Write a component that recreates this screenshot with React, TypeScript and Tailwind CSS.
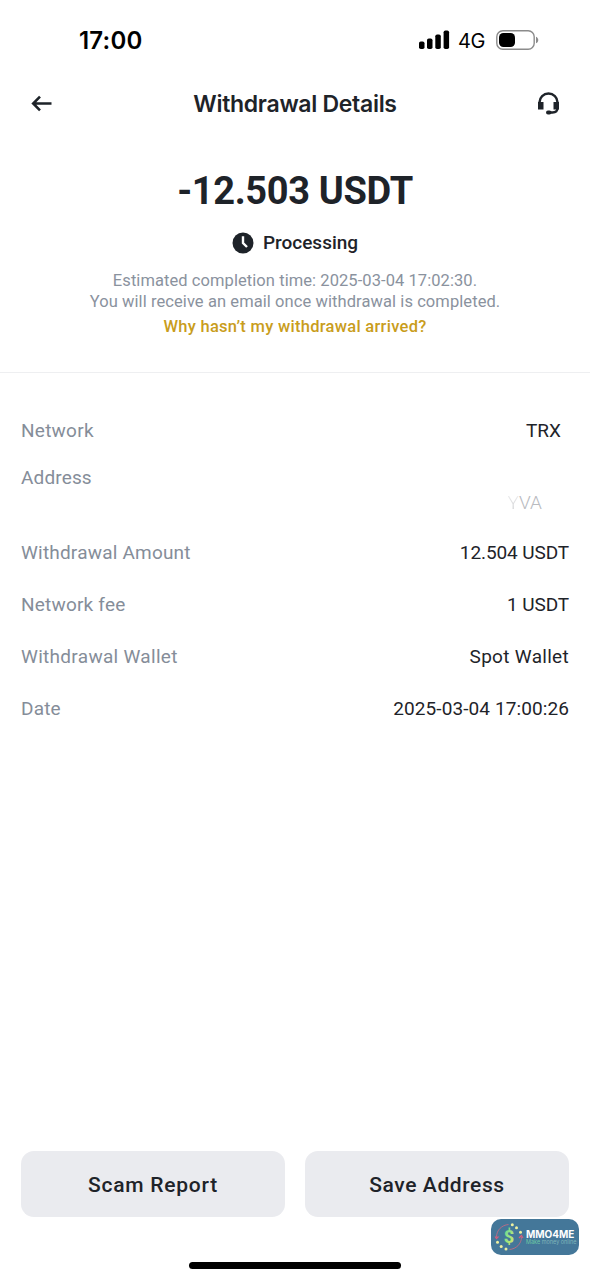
type Detail = { label: string; value: string; row: string; labelTracking: string; valueStyle: string };

const details: Detail[] = [
  { label: "Network", value: "TRX", row: "h-[47px]", labelTracking: "tracking-[0.25px]", valueStyle: "mr-2 tracking-[0px]" },
  { label: "Address", value: "", row: "h-[47px]", labelTracking: "tracking-[0.15px]", valueStyle: "" },
  { label: "Withdrawal Amount", value: "12.504 USDT", row: "h-[52px]", labelTracking: "tracking-[0.2px]", valueStyle: "tracking-[-0.1px]" },
  { label: "Network fee", value: "1 USDT", row: "h-[52px]", labelTracking: "tracking-[0.2px]", valueStyle: "tracking-[-0.1px]" },
  { label: "Withdrawal Wallet", value: "Spot Wallet", row: "h-[52px]", labelTracking: "tracking-[0.3px]", valueStyle: "tracking-[0.3px]" },
  { label: "Date", value: "2025-03-04 17:00:26", row: "h-[52px]", labelTracking: "tracking-[0.2px]", valueStyle: "tracking-[0.1px]" },
];

function StatusBar() {
  return (
    <div className="flex h-20 items-center justify-between pl-[79px] pr-[51px] font-['Inter',sans-serif] text-black">
      <span className="mt-[2px] text-[24px] font-semibold leading-6 tracking-[0.2px]">17:00</span>
      <div className="flex items-center">
        <svg className="mr-[8px]" width="31" height="20" viewBox="0 0 31 20">
          <rect x="0" y="11.5" width="5.5" height="7.5" rx="1.8" />
          <rect x="8" y="8.5" width="5.5" height="10.5" rx="1.8" />
          <rect x="16.3" y="4.5" width="5.5" height="14.5" rx="1.8" />
          <rect x="24.6" y="0.5" width="5.5" height="18.5" rx="1.8" />
        </svg>
        <span className="mr-[11px] mt-[2px] w-[27px] text-[20px] leading-6 tracking-[-0.4px]">4G</span>
        <svg width="43" height="20" viewBox="0 0 43 20">
          <rect x="0.8" y="0.8" width="37.4" height="18.4" rx="6" fill="none" stroke="#8b8b8b" strokeWidth="1.4" />
          <rect x="3" y="3" width="16" height="14" rx="4.4" />
          <path d="M40 6.7C43 8 43 12 40 13.3Z" fill="#8b8b8b" />
        </svg>
      </div>
    </div>
  );
}

function Header() {
  return (
    <header className="flex h-12 items-center justify-between pl-[30px] pr-[30px]">
      <svg width="23" height="18" viewBox="0 0 23 18" fill="none" stroke="#1e2329" strokeWidth="2.6">
        <path d="M21.5 8.5H3M10 1.7L3.2 8.5l6.8 6.8" />
      </svg>
      <h1 className="font-['Inter',sans-serif] text-[23px] font-semibold tracking-[-0.3px]">Withdrawal Details</h1>
      <svg width="23" height="24" viewBox="0 0 23 24">
        <path d="M2.5 11.5V10.3a9 8.8 0 0 1 18 0V16q0 4.5-5 4.5H12" fill="none" stroke="#1e2329" strokeWidth="2.4" />
        <path d="M1 10h5.5v7.5H1zM16.5 10H22v7.5h-5.5z" fill="#1e2329" />
        <rect x="9" y="18.6" width="5.5" height="4" rx="2" fill="#1e2329" />
      </svg>
    </header>
  );
}

function Summary() {
  return (
    <section className="flex h-[245px] flex-col items-center border-b border-[#eeeff1] pt-[39px] text-center">
      <p className="text-[38px] font-bold leading-[48px] tracking-[-0.35px]">-12.503 USDT</p>
      <div className="mt-[16px] flex h-6 items-center gap-[9px]">
        <svg width="22" height="22" viewBox="0 0 22 22">
          <circle cx="11" cy="11" r="10.5" fill="#1e2329" />
          <path d="M11 4.2V11l4 4" fill="none" stroke="#fff" strokeWidth="2.4" />
        </svg>
        <span className="mt-px text-[19px] font-medium tracking-[0px]">Processing</span>
      </div>
      <p className="mt-[15px] whitespace-nowrap text-[16.5px] leading-[21px] text-[#8a929e]">
        <span className="tracking-[0.07px]">Estimated completion time: 2025-03-04 17:02:30.</span>
        <br />
        <span className="tracking-[0.08px]">You will receive an email once withdrawal is completed.</span>
      </p>
      <a className="mt-1 text-[16.5px] font-medium leading-[22px] tracking-[0.28px] text-[#c99d1c]">Why hasn’t my withdrawal arrived?</a>
    </section>
  );
}

function MaskedAddress() {
  return (
    <span className="mr-[27px] mt-[51px] text-[19px] font-light text-[#b9bbbf]">
      <span className="bg-linear-to-b from-[#f6f6f7] to-[#c4c5c8] bg-clip-text text-transparent">Y</span>VA
    </span>
  );
}

function Details() {
  return (
    <dl className="flex-1 px-[21px] pt-[34px]">
      {details.map((d) => (
        <div key={d.label} className={`flex items-center justify-between text-[19px] leading-6 ${d.row} ${d.label === "Address" ? "mb-[26px]" : ""}`}>
          <dt className={`text-[#858d99] ${d.labelTracking}`}>{d.label}</dt>
          <dd className={`flex ${d.valueStyle}`}>{d.value || <MaskedAddress />}</dd>
        </div>
      ))}
    </dl>
  );
}

function Brand() {
  return (
    <div className="absolute left-[491px] top-[1219px] flex h-9 w-22 items-center rounded-[10px] bg-[#447799]">
      <svg className="ml-[3px] shrink-0" width="31" height="32" viewBox="0 0 31 32">
        <defs>
          <linearGradient id="coin" x1="0" y1="0" x2="1" y2="1">
            <stop stopColor="#55d6a0" />
            <stop offset="1" stopColor="#e3ee62" />
          </linearGradient>
        </defs>
        <path d="M2.5 16C2.5 9 8 4 14.5 3.5M27.5 16C27.5 23 22 28 15.5 28.5" fill="none" stroke="#b46c86" strokeWidth="1" />
        <path d="M1 15.5l1.5 2 2-2M25 17l2.5-2.5 1.5 2.5" fill="none" stroke="#d65d7c" strokeWidth="1.2" />
        <g fill="#eff0a0">
          <circle cx="18.3" cy="3.8" r="1.5" /><circle cx="22.5" cy="6.8" r="1.5" /><circle cx="26.5" cy="11.3" r="1.5" />
          <circle cx="3.5" cy="21.2" r="1.5" /><circle cx="7.2" cy="25.5" r="1.5" /><circle cx="12" cy="28" r="1.5" />
        </g>
        <text x="15" y="22" textAnchor="middle" fill="url(#coin)" fontFamily="Roboto, sans-serif" fontWeight="800" fontSize="18">$</text>
      </svg>
      <div className="ml-[1px] mt-px flex flex-col whitespace-nowrap font-['Inter',sans-serif]">
        <span className="text-[10px] font-bold leading-[10px] tracking-[-0.05px] text-white">MMO4ME</span>
        <span className="text-[5.5px] leading-[7px] tracking-[0px] text-[#7fb5b9]"><span className="text-[#6bc6a4]">Make</span> money online</span>
      </div>
    </div>
  );
}

export default function App() {
  return (
    <main className="relative flex h-[1280px] w-[590px] flex-col overflow-hidden bg-white font-['Roboto',sans-serif] text-[#1e2329]">
      <StatusBar />
      <Header />
      <Summary />
      <Details />
      <div className="flex gap-5 px-[21px] text-[21px] font-medium">
        <button className="h-[66px] flex-1 rounded-[13px] bg-[#eaebef] pt-[3px] tracking-[0.75px]">Scam Report</button>
        <button className="h-[66px] flex-1 rounded-[13px] bg-[#eaebef] pt-[3px] tracking-[0.6px]">Save Address</button>
      </div>
      <div className="mb-[11px] ml-[189px] mt-[45px] h-[7px] w-[212px] rounded-full bg-black" />
      <Brand />
    </main>
  );
}
